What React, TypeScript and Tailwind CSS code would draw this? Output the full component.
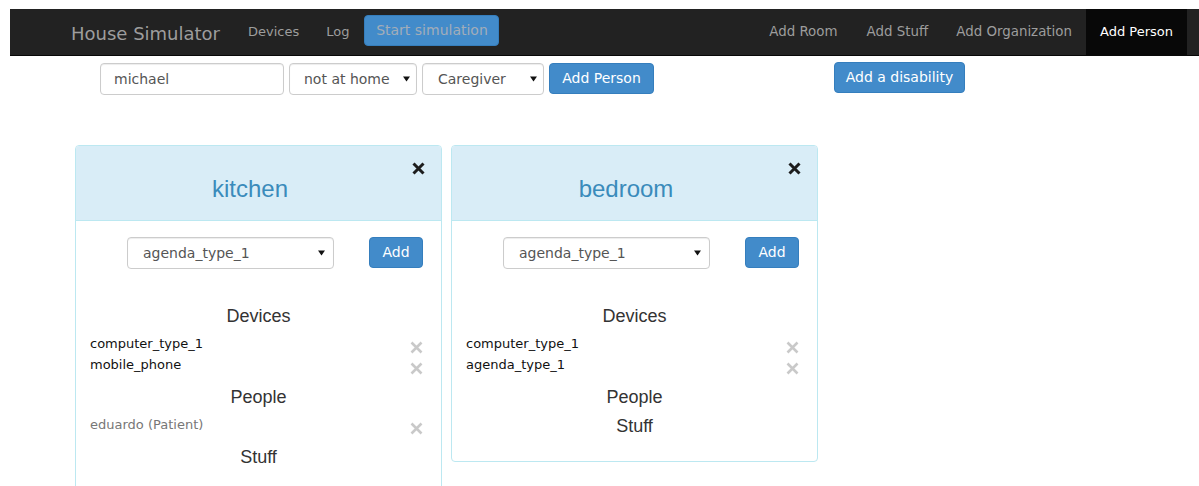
import React from "react";

const Caret = () => (
  <svg width="7" height="6" viewBox="0 0 7 6" className="shrink-0">
    <path d="M0 0.5 L7 0.5 L3.5 5.5 Z" fill="#111" />
  </svg>
);

const RemoveIcon = () => (
  <svg width="13" height="13" viewBox="0 0 13 13" className="translate-y-[4px]">
    <path d="M1.5 1.5 L11.5 11.5 M11.5 1.5 L1.5 11.5" stroke="#c9c9c9" strokeWidth="2.6" />
  </svg>
);

const CloseIcon = () => (
  <svg width="13" height="13" viewBox="0 0 13 13">
    <path d="M1.5 1.5 L11.5 11.5 M11.5 1.5 L1.5 11.5" stroke="#1d1d1d" strokeWidth="3" />
  </svg>
);

function FakeSelect({ value, className }: { value: string; className: string }) {
  return (
    <div
      className={`flex items-center justify-between h-[32px] border border-[#ccc] rounded-[4px] bg-white text-[14px] text-[#555] shadow-[inset_0_1px_1px_rgba(0,0,0,0.075)] ${className}`}
    >
      <span>{value}</span>
      <Caret />
    </div>
  );
}

type Item = { label: string; muted?: boolean };

function Section({ title, items }: { title: string; items: Item[] }) {
  return (
    <div>
      <h4 className="h-[29px] leading-[29px] text-center text-[18px] text-[#333] font-['Liberation_Sans',Arial,sans-serif]">
        {title}
      </h4>
      {items.length > 0 && (
        <ul className="pt-[2px] pb-[8px]">
          {items.map((it) => (
            <li key={it.label} className="flex items-center justify-between h-[21px] pl-[14px] pr-[18px]">
              <span className={`text-[13px] ${it.muted ? "text-[#777]" : "text-[#111]"}`}>{it.label}</span>
              <RemoveIcon />
            </li>
          ))}
        </ul>
      )}
    </div>
  );
}

function RoomCard({
  name,
  devices,
  people,
  stuff,
}: {
  name: string;
  devices: Item[];
  people: Item[];
  stuff: Item[];
}) {
  return (
    <div className="relative w-[367px] border border-[#bce8f1] rounded-[4px] bg-white">
      <div className="h-[75px] bg-[#d9edf7] border-b border-[#bce8f1] rounded-t-[3px] pt-[30px] pr-[17px]">
        <h3 className="text-center text-[24px] leading-[26px] text-[#3a8bbb] font-['Liberation_Sans',Arial,sans-serif]">
          {name}
        </h3>
      </div>
      <button className="absolute right-[16px] top-[16px]">
        <CloseIcon />
      </button>
      <div className="pt-[16px] pb-[20px]">
        <div className="flex items-start">
          <FakeSelect value="agenda_type_1" className="ml-[51px] w-[207px] pl-[15px] pr-[8px]" />
          <button className="ml-[35px] h-[31px] w-[54px] rounded-[4px] bg-[#428bca] border border-[#357ebd] text-white text-[14px]">
            Add
          </button>
        </div>
        <div className="mt-[33px]">
          <Section title="Devices" items={devices} />
          <Section title="People" items={people} />
          <Section title="Stuff" items={stuff} />
        </div>
      </div>
    </div>
  );
}

export default function App() {
  return (
    <div className="w-[1199px] h-[486px] overflow-hidden bg-white font-['DejaVu_Sans','Liberation_Sans',sans-serif]">
      <div className="pl-[10px] pt-[9px]">
        <nav className="h-[47px] bg-[#222] border-b border-[#080808] flex items-stretch pl-[61px] pr-[12px]">
          <div className="flex items-center text-[18px] text-[#9d9d9d] pt-[2px]">House Simulator</div>
          <div className="flex items-center ml-[13px]">
            <a className="pl-[15px] pr-[14px] text-[13px] text-[#9d9d9d]">Devices</a>
            <a className="pl-[13px] pr-[15px] text-[13px] text-[#9d9d9d]">Log</a>
            <button className="h-[31px] w-[135px] rounded-[4px] bg-[#428bca] border border-[#357ebd] text-[14px] text-[#a2adb9] -translate-y-[2px]">
              Start simulation
            </button>
          </div>
          <div className="ml-auto flex items-stretch">
            <a className="flex items-center px-[15px] text-[13.4px] text-[#9d9d9d]">Add Room</a>
            <a className="flex items-center px-[14px] text-[13.4px] text-[#9d9d9d]">Add Stuff</a>
            <a className="flex items-center px-[14px] text-[13.4px] text-[#9d9d9d]">Add Organization</a>
            <a className="flex items-center px-[14px] text-[13px] text-white bg-[#080808]">Add Person</a>
          </div>
        </nav>

        <div className="flex items-start mt-[7px] pl-[90px]">
          <div className="flex items-center h-[32px] w-[184px] border border-[#ccc] rounded-[4px] pl-[13px] text-[14px] text-[#555] shadow-[inset_0_1px_1px_rgba(0,0,0,0.075)]">
            michael
          </div>
          <FakeSelect value="not at home" className="ml-[5px] w-[128px] pl-[14px] pr-[6px]" />
          <FakeSelect value="Caregiver" className="ml-[5px] w-[122px] pl-[15px] pr-[6px]" />
          <button className="ml-[5px] h-[31px] w-[105px] rounded-[4px] bg-[#428bca] border border-[#357ebd] text-white text-[14px]">
            Add Person
          </button>
          <button className="ml-[180px] -mt-[1px] h-[31px] w-[131px] rounded-[4px] bg-[#428bca] border border-[#357ebd] text-white text-[14px]">
            Add a disability
          </button>
        </div>

        <div className="flex items-start gap-[9px] mt-[50px] pl-[65px]">
          <RoomCard
            name="kitchen"
            devices={[{ label: "computer_type_1" }, { label: "mobile_phone" }]}
            people={[{ label: "eduardo (Patient)", muted: true }]}
            stuff={[]}
          />
          <RoomCard
            name="bedroom"
            devices={[{ label: "computer_type_1" }, { label: "agenda_type_1" }]}
            people={[]}
            stuff={[]}
          />
        </div>
      </div>
    </div>
  );
}
